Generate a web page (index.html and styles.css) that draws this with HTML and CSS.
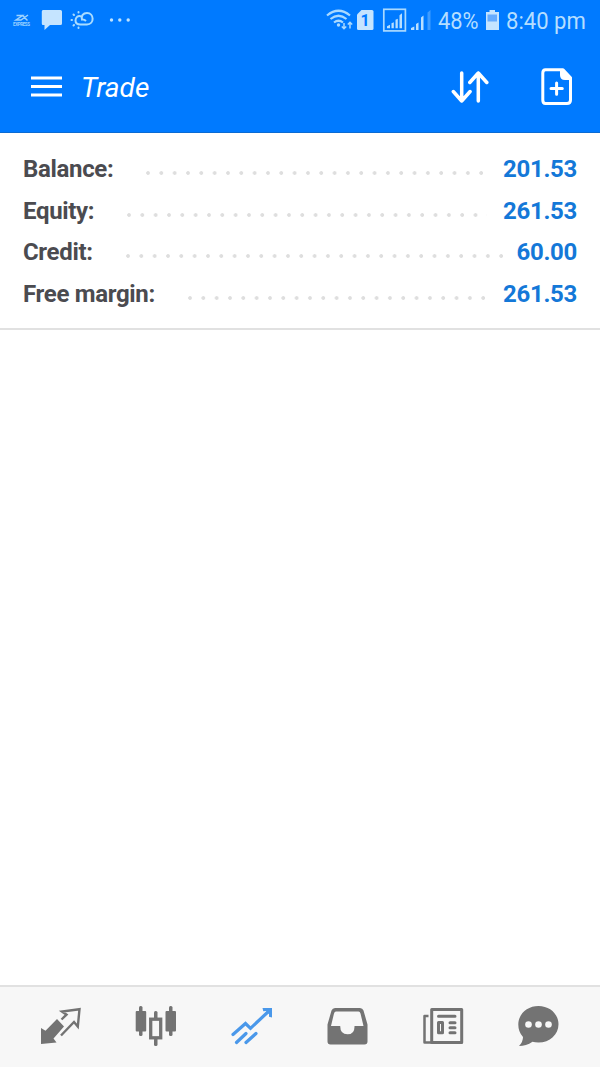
FILE: index.html
```html
<!DOCTYPE html>
<html lang="en">
<head>
  <meta charset="UTF-8">
  <meta name="viewport" content="width=device-width, initial-scale=1.0">
  <title>Trade</title>
  <link rel="stylesheet" href="styles.css">
</head>
<body>
  <div class="screen">
    <!-- Status bar -->
    <div class="status-bar">
      <svg class="status-left" width="140" height="40" viewBox="0 0 140 40">
        <g fill="none" stroke="#9bd2ff" stroke-width="1.500">
          <path d="M16.500 15.500h6l-6.500 4.500h5l7-5M22 15l5.500 5.500"/>
        </g>
        <text class="app-name" x="13" y="25.500" textLength="17">EXPRESS</text>
        <path fill="#c5e4ff" d="M43 10h17.500q1.500 0 1.500 1.500v12q0 1.500-1.500 1.500H50l-5.500 5v-5H43q-1.200 0-1.200-1.500v-12q0-1.500 1.200-1.500z"/>
        <g fill="none" stroke="#a9dcff" stroke-width="2">
          <path d="M81.500 16.500c-3.500-1.500-6 1-6 4 0 3 2.500 4 5 4h6.500c7.500 0 7.500-11.500 0-11.500-4 0-6 3-5 6.500q2-.5 4 1.500"/>
          <path stroke-linecap="round" d="M78.500 12v.5M73.500 14.500l.5.500M71.500 20h.5M73.500 25.500l.5-.5M78.500 27.500v.5"/>
        </g>
        <g fill="#bfe3ff"><circle cx="111.500" cy="20" r="1.700"/><circle cx="119.800" cy="20" r="1.700"/><circle cx="128.200" cy="20" r="1.700"/></g>
      </svg>
      <svg class="status-signal" width="114" height="40" viewBox="322 0 114 40">
        <g fill="none" stroke="#a9d9ff" stroke-width="2.200">
          <path d="M327 15.500q11.500-9.500 23 0M330.500 19q8-6.500 16 0M334 22.500q4.500-3.500 9 0"/>
        </g>
        <circle cx="338.500" cy="25" r="1.700" fill="#a9d9ff"/>
        <path fill="none" stroke="#a9d9ff" stroke-width="1.500" d="M344 23v5.500M341.800 26.500l2.200 2.200 2.200-2.200M350 28.500V22.500M347.800 24.500l2.200-2.200 2.200 2.200"/>
        <path fill="#c5e4ff" d="M361.500 10H372q1.500 0 1.500 1.500v17q0 1.500-1.500 1.500h-13.500q-1.500 0-1.500-1.500v-14z"/>
        <text class="sim-number" x="360.500" y="26">1</text>
        <rect x="383.800" y="9.300" width="21.600" height="21.600" fill="none" stroke="#a9d9ff" stroke-width="1.700"/>
        <path fill="#b9dfff" d="M387 28.300v-2l3-1.500v3.500zM391.500 28.300v-5l2.300-1v6zM395.500 28.300v-8.500l2.300-1v9.500zM399.500 28.300v-13l2.500-2v15z"/>
        <path fill="#b9dfff" d="M411 30v-2l3.300-1.500V30zM416 30v-6l2.500-1.500V30zM421 30V17.500l2.500-2V30z"/>
        <path fill="#3f9cff" d="M427.500 30V12.500l3-2.500v20z"/>
      </svg>
      <span class="battery-level">48%</span>
      <svg class="battery" width="14" height="40" viewBox="485 0 14 40">
        <path fill="#c5e4ff" d="M489.500 10h5.500v2h4v18h-13V12h3.500z"/>
        <path fill="#66acff" d="M487.500 14.500h9.500v7h-9.500z"/>
      </svg>
      <span class="clock">8:40 pm</span>
    </div>

    <!-- Title bar -->
    <div class="header">
      <svg class="menu" width="31" height="22" viewBox="0 0 31 22">
        <path stroke="#fff" stroke-width="3" d="M0 2h31M0 10.500h31M0 19h31"/>
      </svg>
      <h1>Trade</h1>
      <svg class="sort" width="38" height="32" viewBox="451 71 38 32">
        <path fill="none" stroke="#fff" stroke-width="3.500" stroke-linecap="round" stroke-linejoin="round" d="M461.700 73v28M453.300 91.500l8.400 9.500 8.400-9.500M478.300 101V73M469.800 82.500l8.500-9.500 8.500 9.500"/>
      </svg>
      <svg class="new-order" width="32" height="38" viewBox="541 68 32 38">
        <path fill="none" stroke="#fff" stroke-width="3" stroke-linejoin="round" d="M545.500 69.700h17.500l7.500 8v22.300q0 3.500-3.500 3.500h-21.500q-2.700 0-2.700-3.500V73q0-3.300 2.700-3.300z"/>
        <path fill="#fff" d="M560 69.500h4l8 8.500v2h-7q-5 0-5-5z"/>
        <path stroke="#fff" stroke-width="3" stroke-linecap="round" d="M556.600 83v11.300M551 88.600h11.300"/>
      </svg>
    </div>

    <!-- Account summary -->
    <div class="summary">
      <div class="row"><span class="label">Balance:</span><span class="leader"></span><span class="value">201.53</span></div>
      <div class="row"><span class="label">Equity:</span><span class="leader"></span><span class="value">261.53</span></div>
      <div class="row"><span class="label">Credit:</span><span class="leader leader-long"></span><span class="value">60.00</span></div>
      <div class="row"><span class="label">Free margin:</span><span class="leader"></span><span class="value">261.53</span></div>
    </div>

    <div class="positions"></div>

    <!-- Bottom tabs -->
    <div class="tabs">
      <div class="tab">
        <svg width="44" height="44" viewBox="38 1004 44 44">
          <path fill="#737373" d="M41 1028l4.500 2.800 11.500-11.800 7 7.500-10.500 12 3 4-15.500 1.500z"/>
          <path fill="none" stroke="#737373" stroke-width="2.400" d="M61.500 1019.500l5-4.800-4.500-3.200 17.500-2.300-1.700 17.300-3.800-4.500-13 13.500"/>
        </svg>
      </div>
      <div class="tab">
        <svg width="44" height="44" viewBox="134 1004 44 44">
          <g fill="#737373">
            <rect x="135.700" y="1011" width="10.500" height="20.500" rx="1"/>
            <rect x="139" y="1006" width="3.500" height="30" rx="1.500"/>
            <rect x="165.500" y="1011" width="10.500" height="20.500" rx="1"/>
            <rect x="169" y="1006" width="3.500" height="30" rx="1.500"/>
            <rect x="154" y="1011" width="3.500" height="8" rx="1.500"/>
            <rect x="154" y="1038" width="3.500" height="8" rx="1.500"/>
          </g>
          <rect x="150.700" y="1019.200" width="10" height="18.600" fill="none" stroke="#737373" stroke-width="3.300"/>
        </svg>
      </div>
      <div class="tab">
        <svg width="44" height="44" viewBox="230 1004 44 44">
          <path fill="none" stroke="#4a98ea" stroke-width="3.200" stroke-linecap="round" d="M233 1034.500l12.500-11 5 4.800 19-17.800M236.500 1042.500l9.500-9M246 1042.500l10-9"/>
          <path fill="#4a98ea" d="M262.500 1008h9.500v9.500l-3-.8v-2.700l-3-3-2.700.2z"/>
        </svg>
      </div>
      <div class="tab">
        <svg width="44" height="44" viewBox="326 1004 44 44">
          <path fill="#737373" fill-rule="evenodd" d="M335 1008h25q2.500 0 3.500 2.500l4 14v17q0 3-3 3h-34q-3 0-3-3v-17l4-14q1-2.500 3.500-2.500zM336 1011.500q-1.500 0-2 2l-3 12.500h9.200q0 8.300 7.300 8.300t7-8.300h9l-3-12.500q-.5-2-2-2z"/>
        </svg>
      </div>
      <div class="tab">
        <svg width="44" height="44" viewBox="422 1004 44 44">
          <path fill="none" stroke="#737373" stroke-width="3" stroke-linejoin="round" d="M431.700 1009.500h30v33h-30z"/>
          <path fill="none" stroke="#737373" stroke-width="2.500" stroke-linejoin="round" d="M428.500 1016h-4v26.500h7"/>
          <path stroke="#737373" stroke-width="3" stroke-linecap="round" d="M438.500 1016.200h16.500M450 1022.700h5M450 1027.700h5M450 1032.800h5"/>
          <path fill="none" stroke="#737373" stroke-width="3" stroke-linejoin="round" d="M438.500 1022.500h4v10.300h-4z"/>
        </svg>
      </div>
      <div class="tab">
        <svg width="44" height="44" viewBox="518 1004 44 44">
          <path fill="#737373" d="M538.500 1006c11.300 0 20 8 20 18.200s-8.700 18.300-20 18.300q-3.500 0-6-.8-6.500 4.300-13.500 4.300 4-4 4-9-4.700-5-4.700-12.500c0-10.500 9-18.500 20.200-18.500z"/>
          <g fill="#f7f7f7"><circle cx="528.500" cy="1024.500" r="3.300"/><circle cx="538.500" cy="1024.500" r="3.300"/><circle cx="548.500" cy="1024.500" r="3.300"/></g>
        </svg>
      </div>
    </div>
  </div>
</body>
</html>
```

FILE: styles.css
```css
:root {
  --blue: #007aff;
  --value: #1478d8;
  --text: #4b4b50;
  --line: #e1e1e1;
}
* { box-sizing: border-box; }
body {
  margin: 0;
  background: #fff;
  color: var(--text);
  font-family: Roboto, sans-serif;
}
svg {
  display: block;
  flex: none;
}
.screen {
  width: 600px;
  height: 1067px;
  display: flex;
  flex-direction: column;
}
/* Status bar */
.status-bar {
  height: 40px;
  display: flex;
  background: var(--blue);
  color: #b5deff;
  font-size: 24px;
  line-height: 42px;
  white-space: nowrap;
}
.status-left {
  margin-right: 182px;
}
.app-name {
  font-size: 4.5px;
  font-weight: 700;
  fill: #9bd2ff;
}
.sim-number {
  font-size: 16px;
  font-weight: 700;
  fill: var(--blue);
}
.battery-level,
.clock {
  transform-origin: left center;
}
.battery-level {
  width: 46px;
  margin-left: 2px;
  transform: scaleX(0.91);
}
.battery {
  margin-left: 1px;
}
.clock {
  margin-left: 7px;
  transform: scaleX(0.92);
}
/* Title bar */
.header {
  height: 93px;
  padding: 1px 27px 0 31px;
  display: flex;
  align-items: center;
  background: var(--blue);
  border-bottom: 1px solid #0b6bd3;
}
.menu {
  margin-top: 1px;
}
.header h1 {
  flex: 1;
  margin: 2px 0 0 19px;
  color: #fff;
  font-size: 28px;
  font-style: italic;
  font-weight: 400;
}
.sort {
  margin-right: 52px;
}
/* Account summary */
.summary {
  height: 197px;
  padding: 15px 23px 0;
  border-bottom: 2px solid var(--line);
}
.row {
  height: 41.67px;
  display: flex;
  font-size: 24px;
  font-weight: 700;
  line-height: 42px;
}
.label {
  letter-spacing: -0.33px;
}
.leader {
  flex: 1;
  height: 4px;
  margin: 23px 16px 0 33px;
  background: radial-gradient(circle at 2px 2px, #dedede 1.5px, transparent 2.2px) 0 0 / 13.34px 4px repeat-x;
}
.leader-long {
  margin-right: 13px;
}
.value {
  color: var(--value);
  letter-spacing: -0.3px;
}
.positions {
  flex: 1;
}
/* Bottom tabs */
.tabs {
  height: 82px;
  padding: 17px 38px 0;
  display: flex;
  justify-content: space-between;
  background: #f7f7f7;
  border-top: 2px solid var(--line);
}
```
